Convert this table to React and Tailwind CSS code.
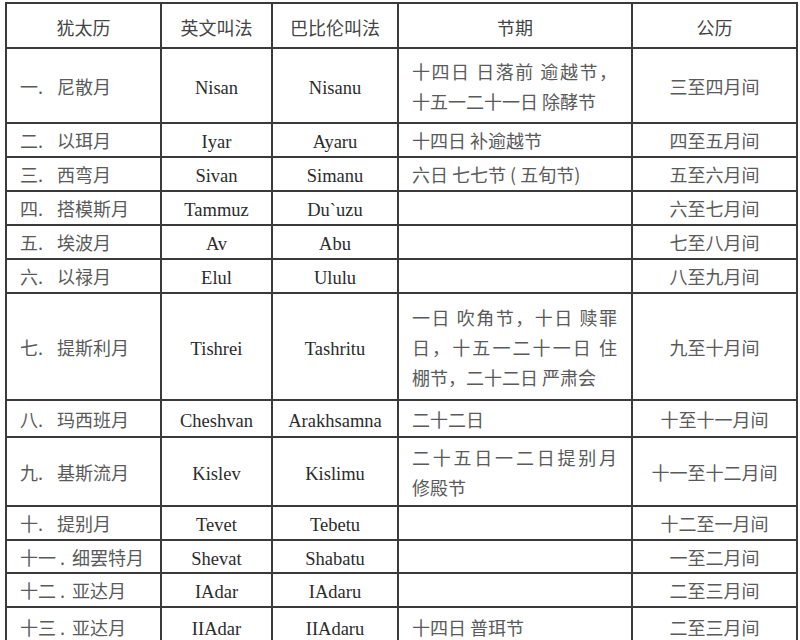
const cn = { fontFamily: '"Noto Sans CJK SC", "Noto Sans", sans-serif' }
const serif = { fontFamily: '"Liberation Serif", "Noto Sans CJK SC", serif' }

const rows = [
  { h: 'h-[75px]', num: '一', name: '尼散月', en: 'Nisan', bab: 'Nisanu', fest: [['十四日 日落前 逾越节，', true], ['十五一二十一日 除酵节']], greg: '三至四月间' },
  { h: 'h-[34px]', num: '二', name: '以珥月', en: 'Iyar', bab: 'Ayaru', fest: [['十四日 补逾越节']], greg: '四至五月间' },
  { h: 'h-[34px]', num: '三', name: '西弯月', en: 'Sivan', bab: 'Simanu', fest: [['六日 七七节 ( 五旬节)']], greg: '五至六月间' },
  { h: 'h-[34px]', num: '四', name: '搭模斯月', en: 'Tammuz', bab: 'Du`uzu', fest: [], greg: '六至七月间' },
  { h: 'h-[34px]', num: '五', name: '埃波月', en: 'Av', bab: 'Abu', fest: [], greg: '七至八月间' },
  { h: 'h-[34px]', num: '六', name: '以禄月', en: 'Elul', bab: 'Ululu', fest: [], greg: '八至九月间' },
  { h: 'h-[107px]', num: '七', name: '提斯利月', en: 'Tishrei', bab: 'Tashritu', fest: [['一日 吹角节，十日 赎罪', true], ['日，十五一二十一日 住', true], ['棚节，二十二日 严肃会']], greg: '九至十月间' },
  { h: 'h-[37px]', num: '八', name: '玛西班月', en: 'Cheshvan', bab: 'Arakhsamna', fest: [['二十二日']], greg: '十至十一月间' },
  { h: 'h-[69px]', num: '九', name: '基斯流月', en: 'Kislev', bab: 'Kislimu', fest: [['二十五日一二日提别月', true], ['修殿节']], greg: '十一至十二月间' },
  { h: 'h-[34px]', num: '十', name: '提别月', en: 'Tevet', bab: 'Tebetu', fest: [], greg: '十二至一月间' },
  { h: 'h-[33px]', num: '十一', name: '细罢特月', en: 'Shevat', bab: 'Shabatu', fest: [], greg: '一至二月间' },
  { h: 'h-[34px]', num: '十二', name: '亚达月', en: 'IAdar', bab: 'IAdaru', fest: [], greg: '二至三月间' },
  { h: 'h-[40px]', num: '十三', name: '亚达月', en: 'IIAdar', bab: 'IIAdaru', fest: [['十四日 普珥节']], greg: '二至三月间' },
]

const cell = 'border-r-2 border-b-2 border-[#3a3a3a] flex items-center'

export default function App() {
  return (
    <div className="w-[800px] h-[640px] overflow-hidden bg-white pt-[2px] pl-[5px]">
      <div className="grid grid-cols-[155px_111px_126px_234px_165px] w-[793px] border-t-2 border-l-2 border-[#3a3a3a] text-[18px] leading-[30px]">
        {['犹太历', '英文叫法', '巴比伦叫法', '节期', '公历'].map(t => (
          <div key={t} className={`${cell} h-[45px] justify-center text-[#444] pt-[3px]`} style={cn}>{t}</div>
        ))}

        {rows.map((r, i) => (
          <div key={i} className="contents">
            <div className={`${cell} ${r.h} pl-[13px] text-[#5a5a5a]`} style={cn}>
              <span className={r.num.length > 1 ? 'inline-block w-[52px]' : 'inline-block w-[37px]'}>
                {r.num}{r.num.length > 1 ? ' .' : '.'}
              </span>
              <span>{r.name}</span>
            </div>
            <div className={`${cell} ${r.h} justify-center pt-[4px] text-[#2b2b2b] text-[18.5px]`} style={serif}>{r.en}</div>
            <div className={`${cell} ${r.h} justify-center pt-[4px] text-[#2b2b2b] text-[18.5px]`} style={serif}>{r.bab}</div>
            <div className={`${cell} ${r.h} pl-[13px] pr-[14px] text-[#5a5a5a]`} style={cn}>
              <div className="w-full">
                {r.fest.map(([line, full], j) => (
                  <div key={j} className={full ? 'text-justify [text-align-last:justify]' : ''}>{line}</div>
                ))}
              </div>
            </div>
            <div className={`${cell} ${r.h} justify-center text-[#5a5a5a]`} style={cn}>{r.greg}</div>
          </div>
        ))}
      </div>
    </div>
  )
}
